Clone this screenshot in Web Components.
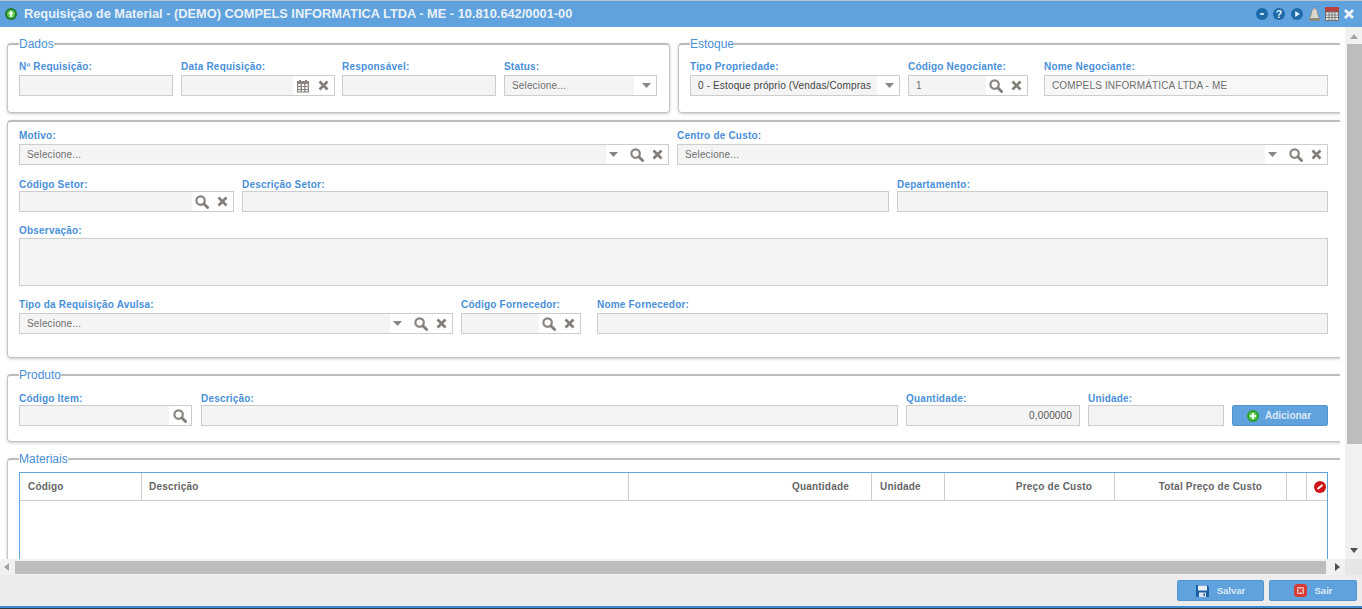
<!DOCTYPE html>
<html lang="pt-BR">
<head>
<meta charset="utf-8">
<title>Requisição de Material</title>
<style>
html,body{margin:0;padding:0;height:100%;overflow:hidden;background:#fff;font-family:"Liberation Sans",Arial,sans-serif}
</style>
</head>
<body>
<app-window>
  <title-bar slot="title" text="Requisição de Material - (DEMO) COMPELS INFORMATICA LTDA - ME - 10.810.642/0001-00"></title-bar>

  <div style="display:flex;gap:8px">
    <form-panel legend="Dados" style="flex:0 0 662px;margin-right:0;--pad:9px 0 16px">
      <form-row cols="154px 154px 154px 153px">
        <form-field label="Nº Requisição:"></form-field>
        <form-field label="Data Requisição:" icons="calendar clear"></form-field>
        <form-field label="Responsável:" style="margin:0 1px 0 -1px"></form-field>
        <form-field label="Status:" placeholder="Selecione..." icons="caret" style="margin:0 1px 0 -1px"></form-field>
      </form-row>
    </form-panel>
    <form-panel legend="Estoque" style="flex:0 0 675px;--pad:9px 0 16px">
      <form-row cols="210px 120px 0 284px">
        <form-field label="Tipo Propriedade:" value="0 - Estoque próprio (Vendas/Compras" icons="caret" dark></form-field>
        <form-field label="Código Negociante:" value="1" icons="search clear"></form-field>
        <span></span>
        <form-field label="Nome Negociante:" value="COMPELS INFORMÁTICA LTDA - ME" muted></form-field>
      </form-row>
    </form-panel>
  </div>

  <form-panel style="margin-top:-3px;--pad:7px 0 23px;--row-gap:11px">
    <form-row cols="650px 651px">
      <form-field label="Motivo:" placeholder="Selecione..." icons="caret search clear"></form-field>
      <form-field label="Centro de Custo:" placeholder="Selecione..." icons="caret search clear"></form-field>
    </form-row>
    <form-row cols="215px 647px 431px" style="--lg:1px">
      <form-field label="Código Setor:" icons="search clear"></form-field>
      <form-field label="Descrição Setor:"></form-field>
      <form-field label="Departamento:"></form-field>
    </form-row>
    <form-row cols="1309px" style="--lg:2px">
      <form-field label="Observação:" area></form-field>
    </form-row>
    <form-row cols="434px 120px 0 731px" style="margin-top:1px">
      <form-field label="Tipo da Requisição Avulsa:" placeholder="Selecione..." icons="caret search clear"></form-field>
      <form-field label="Código Fornecedor:" icons="search clear"></form-field>
      <span></span>
      <form-field label="Nome Fornecedor:"></form-field>
    </form-row>
  </form-panel>

  <form-panel legend="Produto" style="--pad:8px 0 15px">
    <form-row cols="174px 697px 174px 136px 96px" style="--lg:1px">
      <form-field label="Código Item:" icons="search" style="margin-right:1px"></form-field>
      <form-field label="Descrição:"></form-field>
      <form-field label="Quantidade:" value="0,000000" right></form-field>
      <form-field label="Unidade:"></form-field>
      <app-button icon="add" gap="6" style="align-self:end;padding-right:2px">Adicionar</app-button>
    </form-row>
  </form-panel>

  <form-panel legend="Materiais" style="--pad:6px 0 0">
    <data-grid></data-grid>
  </form-panel>

  <app-button slot="actions" icon="save" style="width:87px;font-size:9.5px">Salvar</app-button>
  <app-button slot="actions" icon="exit" style="width:88px;font-size:9.5px">Sair</app-button>
</app-window>

<script>
const ICONS = {
  calendar: `<svg width="14" height="14" viewBox="0 0 14 14"><path fill="#8a8580" d="M1 2h2V1h2v1h4V1h2v1h2v11.500H1z"/><g fill="#fff"><rect x="2.300" y="5" width="2.200" height="2"/><rect x="5.900" y="5" width="2.200" height="2"/><rect x="9.500" y="5" width="2.200" height="2"/><rect x="2.300" y="8" width="2.200" height="2"/><rect x="5.900" y="8" width="2.200" height="2"/><rect x="9.500" y="8" width="2.200" height="2"/><rect x="2.300" y="11" width="2.200" height="1.400"/><rect x="5.900" y="11" width="2.200" height="1.400"/><rect x="9.500" y="11" width="2.200" height="1.400"/></g></svg>`,
  clear: `<svg width="11" height="11" viewBox="0 0 11 11"><path stroke="#827d77" stroke-width="2.600" d="M1.500 1.500l8 8M9.500 1.500l-8 8"/></svg>`,
  search: `<svg width="14" height="14" viewBox="0 0 14 14" fill="none"><circle cx="5.600" cy="5.600" r="4.200" stroke="#8a8580" stroke-width="2.200"/><path stroke="#827d77" stroke-width="2.800" stroke-linecap="round" d="M9 9l3.600 3.600"/></svg>`,
  caret: `<svg class="caret" width="9" height="5" viewBox="0 0 9 5"><path fill="#8a8580" d="M0 0h9L4.500 5z"/></svg>`
};

function define(name, html) {
  customElements.define(name, class extends HTMLElement {
    connectedCallback() {
      if (this.shadowRoot) return;
      this.attachShadow({mode: "open"});
      this.shadowRoot.innerHTML = typeof html === "function" ? html(this) : html;
    }
  });
}

define("app-window", `
<style>
:host{display:grid;grid-template-columns:1fr 17px;grid-template-rows:27px 532px 16px 31px 3px;width:1362px;height:609px;overflow:hidden;background:#fff}
.title{grid-column:1/3}
.content{overflow:hidden;margin-right:5px;padding:10px 0 0 7px;display:flex;flex-direction:column;gap:10px;min-width:0}
.v,.h{background:#f1f1f1;position:relative}
.v i{display:block;width:15px;height:400px;background:#bdbdbd;position:absolute;top:17px;left:2px}
.h i{position:absolute;left:15px;right:19px;top:2px;bottom:1px;background:#bdbdbd}
.up,.dn,.lt,.rt{width:0;height:0;border:4px solid transparent;position:absolute}
.up{border-bottom:5px solid #a3a3a3;border-top:0;top:7px;left:5px}
.dn{border-top:5px solid #505050;border-bottom:0;bottom:6px;left:5px}
.lt{border-right:5px solid #a3a3a3;border-left:0;left:4px;top:4px}
.rt{border-left:5px solid #505050;border-right:0;right:5px;top:4px}
.corner{background:#e6e6e6}
.foot{grid-column:1/3;background:#ececec;display:flex;justify-content:flex-end;align-items:center;gap:5px;padding:0 5px 0 0}
.line{grid-column:1/3;background:#3d8ad0;border-bottom:1px solid #33383d}
</style>
<div class="title"><slot name="title"></slot></div>
<div class="content"><slot></slot></div>
<div class="v"><span class="up"></span><i></i><span class="dn"></span></div>
<div class="h"><span class="lt"></span><i></i><span class="rt"></span></div>
<div class="corner"></div>
<div class="foot"><slot name="actions"></slot></div>
<div class="line"></div>`);

const roundIcon = inner => `<svg width="12" height="12" viewBox="0 0 12 12"><circle cx="6" cy="6" r="6" fill="#1c6aa8"/>${inner}</svg>`;

define("title-bar", el => `
<style>
:host{display:flex;align-items:center;height:27px;box-sizing:border-box;background:#5fa2dd;border-top:1px solid #b9c6d2;color:#e9f1f8;padding:0 8px 0 5px}
.t{font:bold 12.800px/1 "Liberation Sans",Arial,sans-serif;flex:1;margin-left:7px;white-space:nowrap}
.tools{display:flex;align-items:center;gap:5.500px}
.tools>*{display:block}
</style>
<svg width="12" height="12" viewBox="0 0 12 12"><circle cx="6" cy="6" r="6" fill="#1f7a2a"/><circle cx="6" cy="6" r="4" fill="#63c955"/><path fill="#f0ffe8" d="M6 2.600L8.600 6H7v3H5V6H3.400z"/></svg>
<span class="t">${el.getAttribute("text")}</span>
<div class="tools">
  ${roundIcon('<rect x="3.800" y="5" width="4.400" height="2" rx="1" fill="#cfe2f2"/>')}
  ${roundIcon('<text x="6" y="10" text-anchor="middle" font-family="Liberation Sans" font-weight="bold" font-size="10.500" fill="#e8f2fb">?</text>')}
  ${roundIcon('<path fill="#e8f2fb" d="M4.200 3L9 6 4.200 9z"/>')}
  <svg width="13" height="15" viewBox="0 0 13 15"><path fill="#d9d6cb" stroke="#85827a" stroke-width=".8" d="M6.500 1c1 0 1.400.7 1.400 1.400C9.300 3 9.500 4.500 9.700 6.500c.2 2 .9 3.300 2.300 5H1c1.400-1.700 2.100-3 2.300-5 .2-2 .4-3.500 1.800-4.100C5.100 1.700 5.500 1 6.500 1z"/><rect x="1" y="12" width="11" height="2" fill="#8f8c82"/></svg>
  <svg style="margin-left:-2px" width="14" height="14" viewBox="0 0 14 14"><rect width="14" height="14" fill="#6d6d70"/><rect width="14" height="4.500" fill="#b8433e"/><rect x="1" y="5.500" width="12" height="7.500" fill="#e4e4e4"/><path stroke="#7d7d80" stroke-width="1" d="M1 8h12M1 10.500h12M4 5.500v8M7 5.500v8M10 5.500v8"/></svg>
  <svg width="10" height="10" viewBox="0 0 10 10"><path stroke="#eef5fb" stroke-width="2.800" d="M1 1l8 8M9 1l-8 8"/></svg>
</div>`);

define("form-panel", el => {
  const legend = el.getAttribute("legend");
  return `
<style>
:host{display:block;margin-right:-12px}
fieldset{margin:0;padding:0 11px;border:1px solid #c4c4c4;border-top:2px solid #bcbcbc;border-radius:4px;box-shadow:0 1px 3px rgba(0,0,0,.22);min-width:0;background:#fff}
legend{padding:0;font:12px/14px "Liberation Sans",Arial,sans-serif;color:#4a90d9;height:14px}
.pad{display:flex;flex-direction:column;gap:var(--row-gap,7px);padding:var(--pad,9px 0 15px)}
</style>
<fieldset>${legend ? `<legend>${legend}</legend>` : ""}<div class="pad"><slot></slot></div></fieldset>`;
});

define("form-row", el => `
<style>
:host{display:grid;grid-template-columns:${el.getAttribute("cols")};column-gap:8px}
</style><slot></slot>`);

define("form-field", el => {
  const icons = (el.getAttribute("icons") || "").split(" ").filter(Boolean);
  const val = el.getAttribute("value") || el.getAttribute("placeholder") || "";
  const area = el.hasAttribute("area");
  const pad = icons.length > 1 ? "0 5px 0 3px" : icons[0] === "caret" ? "0 5px 0 8px" : "0 4px";
  return `
<style>
:host{display:block;min-width:0}
label{display:block;font:bold 10px/12px "Liberation Sans",Arial,sans-serif;letter-spacing:.2px;color:#4a90d9;margin:calc(4px - var(--lg,3px)) 0 calc(var(--lg,3px) - 1px);white-space:nowrap}
.box{display:flex;align-items:stretch;height:${area ? 48 : 21}px;box-sizing:border-box;border:1px solid #cdcdcd;background:#fff;font:10px/19px "Liberation Sans",Arial,sans-serif;color:#6f6f6f;letter-spacing:.15px}
.val{flex:1;min-width:0;background:${el.hasAttribute("muted") ? "#f7f7f7" : "#f4f4f4"};padding:0 7px;overflow:hidden;white-space:nowrap;${el.hasAttribute("right") ? "text-align:right;color:#555;" : ""}${el.hasAttribute("dark") ? "color:#444;" : ""}}
.ic{display:flex;align-items:center;justify-content:center;gap:8px;padding:${pad};background:#fff}
.ic svg{display:block}
.ic .caret:not(:last-child){margin-right:4px}
</style>
<label>${el.getAttribute("label")}</label>
<div class="box"><div class="val">${val}</div>${icons.length ? `<div class="ic">${icons.map(i => ICONS[i]).join("")}</div>` : ""}</div>`;
});

define("app-button", el => {
  const ic = {
    add: `<svg width="12" height="12" viewBox="0 0 12 12"><circle cx="6" cy="6" r="6" fill="#2ca02c"/><circle cx="6" cy="6" r="4" fill="#63cc55"/><path stroke="#f0fff0" stroke-width="2" d="M6 3v6M3 6h6"/></svg>`,
    save: `<svg width="13" height="13" viewBox="0 0 13 13"><path fill="#1c5fa5" d="M0 1h11l2 2v10H0z"/><rect x="2" y="1.500" width="9" height="5" fill="#e9eef5"/><rect x="3" y="8.500" width="7" height="4.500" fill="#dfe6ee"/><rect x="7.500" y="9.500" width="1.500" height="2.500" fill="#1c5fa5"/></svg>`,
    exit: `<svg width="13" height="13" viewBox="0 0 13 13"><rect width="13" height="13" rx="3.500" fill="#d83a36"/><rect x="3" y="3" width="7" height="7" rx="1" fill="#f2b5b2"/><path stroke="#d0302c" stroke-width="1.500" d="M4.500 4.500l4 4M8.500 4.500l-4 4"/></svg>`
  }[el.getAttribute("icon")];
  return `
<style>
:host{display:block;height:21px;box-sizing:border-box;background:#5fa2dd;border:1px solid #5595cf;border-radius:2px;color:#dce9f5;font:bold 10px/19px "Liberation Sans",Arial,sans-serif}
.in{display:flex;align-items:center;justify-content:center;gap:${el.getAttribute("gap") || 8}px;height:100%}
svg{display:block}
</style><div class="in">${ic}<span><slot></slot></span></div>`;
});

define("data-grid", () => {
  const cols = [["Código",122,8],["Descrição",487,7],["Quantidade",243,0,22],["Unidade",73,8],["Preço de Custo",170,0,22],["Total Preço de Custo",172,0,24],["",20,8],["",20,8]];
  return `
<style>
:host{display:block;height:120px;width:1309px;box-sizing:border-box;border:1px solid #5fa2dd;border-bottom:0}
.head{display:flex;height:28px;box-sizing:border-box;border-bottom:1px solid #cdcdcd;font:bold 10px/27px "Liberation Sans",Arial,sans-serif;letter-spacing:.2px;color:#666}
.c{box-sizing:border-box;border-right:1px solid #cdcdcd;flex:none;white-space:nowrap;position:relative}
.c:last-child{border:0}
svg{position:absolute;left:7px;top:8px}
</style>
<div class="head">${cols.map((c,i) => `<div class="c" style="width:${c[1]}px;${c[3] ? `text-align:right;padding-right:${c[3]}px` : `padding-left:${c[2]}px`}">${c[0]}${i === 7 ? `<svg width="12" height="12" viewBox="0 0 12 12"><circle cx="6" cy="6" r="6" fill="#cf1518"/><path stroke="#fff" stroke-width="2" d="M3.500 8L8.500 4"/></svg>` : ""}</div>`).join("")}</div>`;
});
</script>
</body>
</html>
